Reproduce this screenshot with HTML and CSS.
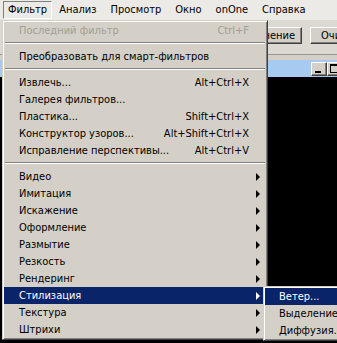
FILE: index.html
```html
<!DOCTYPE html>
<html lang="ru">
<head>
  <meta charset="UTF-8">
  <title>Фильтр</title>
  <link rel="stylesheet" href="styles.css">
</head>
<body>
  <div class="menubar">
    <span class="mb-item active">Фильтр</span>
    <span class="mb-item">Анализ</span>
    <span class="mb-item">Просмотр</span>
    <span class="mb-item">Окно</span>
    <span class="mb-item">onOne</span>
    <span class="mb-item">Справка</span>
  </div>

  <div class="workspace">
    <div class="toolbar">
      <span class="btn btn-one">Сохранение</span>
      <span class="btn btn-two">Очистить</span>
    </div>
    <div class="doc">
      <div class="doc-title">
        <span class="wbtn"><i class="min"></i></span>
        <span class="wbtn"><i class="max"></i></span>
      </div>
      <div class="doc-body"></div>
    </div>
  </div>

  <div class="menu">
    <div class="mi disabled"><span class="lbl">Последний фильтр</span><span class="key">Ctrl+F</span></div>
    <div class="sep"></div>
    <div class="mi"><span class="lbl">Преобразовать для смарт-фильтров</span></div>
    <div class="sep"></div>
    <div class="mi"><span class="lbl">Извлечь...</span><span class="key">Alt+Ctrl+X</span></div>
    <div class="mi"><span class="lbl">Галерея фильтров...</span></div>
    <div class="mi"><span class="lbl">Пластика...</span><span class="key">Shift+Ctrl+X</span></div>
    <div class="mi"><span class="lbl">Конструктор узоров...</span><span class="key">Alt+Shift+Ctrl+X</span></div>
    <div class="mi"><span class="lbl">Исправление перспективы...</span><span class="key">Alt+Ctrl+V</span></div>
    <div class="sep"></div>
    <div class="mi"><span class="lbl">Видео</span><i class="arrow"></i></div>
    <div class="mi"><span class="lbl">Имитация</span><i class="arrow"></i></div>
    <div class="mi"><span class="lbl">Искажение</span><i class="arrow"></i></div>
    <div class="mi"><span class="lbl">Оформление</span><i class="arrow"></i></div>
    <div class="mi"><span class="lbl">Размытие</span><i class="arrow"></i></div>
    <div class="mi"><span class="lbl">Резкость</span><i class="arrow"></i></div>
    <div class="mi"><span class="lbl">Рендеринг</span><i class="arrow"></i></div>
    <div class="mi selected"><span class="lbl">Стилизация</span><i class="arrow"></i></div>
    <div class="mi"><span class="lbl">Текстура</span><i class="arrow"></i></div>
    <div class="mi"><span class="lbl">Штрихи</span><i class="arrow"></i></div>
  </div>

  <div class="menu submenu">
    <div class="mi selected"><span class="lbl">Ветер...</span></div>
    <div class="mi"><span class="lbl">Выделение краев...</span></div>
    <div class="mi"><span class="lbl">Диффузия...</span></div>
  </div>
</body>
</html>
```

FILE: styles.css
```css
body {
  margin: 0;
  width: 337px;
  height: 343px;
  overflow: hidden;
  position: relative;
  font-family: "DejaVu Sans Condensed", "DejaVu Sans", sans-serif;
  font-stretch: semi-condensed;
  font-size: 11px;
  color: #000;
  background: #d4d0c8;
}

.menubar {
  height: 20px;
  display: flex;
  align-items: center;
  padding-left: 3px;
  background: #eceae6;
  white-space: nowrap;
}
.mb-item {
  height: 16px;
  line-height: 16px;
  padding: 0 6px;
  border: 1px solid transparent;
}
.mb-item.active {
  padding: 0 4px 0 4px;
  border-color: #808080 #fff #fff #808080;
}

.workspace {
  width: 345px;
}
.toolbar {
  height: 35px;
  box-sizing: border-box;
  display: flex;
  align-items: flex-start;
  gap: 8px;
  padding: 7px 0 0 230px;
  background: #dcd9d2;
  border-bottom: 1px solid #9a978f;
  white-space: nowrap;
  overflow: hidden;
}
.btn {
  flex: none;
  height: 17px;
  line-height: 16px;
  box-sizing: border-box;
  border: 1px solid;
  border-color: #fff #404040 #404040 #fff;
  box-shadow: inset -1px -1px 0 #808080;
  background: #d4d0c8;
  overflow: hidden;
}
.btn-one {
  width: 72px;
  text-align: right;
  padding-right: 6px;
}
.btn-two {
  width: 70px;
  padding-left: 10px;
}

.doc {
  padding-top: 5px;
}
.doc-title {
  height: 17px;
  display: flex;
  align-items: center;
  justify-content: flex-end;
  padding-right: 2px;
  background: #a6caf0;
}
.wbtn {
  width: 16px;
  height: 14px;
  box-sizing: border-box;
  border: 1px solid;
  border-color: #fff #404040 #404040 #fff;
  box-shadow: inset -1px -1px 0 #808080;
  background: #d4d0c8;
  position: relative;
}
.wbtn .min {
  position: absolute;
  left: 3px;
  bottom: 2px;
  width: 6px;
  height: 2px;
  background: #000;
}
.wbtn .max {
  position: absolute;
  left: 2px;
  top: 1px;
  width: 9px;
  height: 9px;
  box-sizing: border-box;
  border: 1px solid #000;
  border-top-width: 2px;
}
.doc-body {
  height: 270px;
  background: #000;
}

.menu {
  position: absolute;
  top: 20px;
  left: 2px;
  width: 266px;
  box-sizing: border-box;
  padding: 1px 0;
  border: 1px solid;
  border-color: #d4d0c8 #404040 #404040 #d4d0c8;
  box-shadow: inset 1px 1px 0 #fff, inset -1px -1px 0 #808080;
  background: #d4d0c8;
  white-space: nowrap;
  overflow: hidden;
}
.mi {
  height: 17px;
  line-height: 17px;
  display: flex;
  align-items: center;
  padding: 0 6px 0 15px;
  margin: 0 1px;
}
.mi .lbl {
  flex: 1;
  min-width: 0;
}
.mi .key {
  margin-right: 11px;
}
.mi.disabled {
  color: #a19e96;
}
.mi.selected {
  background: #0a246a;
  color: #fff;
}
.arrow {
  width: 0;
  height: 0;
  border-left: 4px solid #000;
  border-top: 4px solid transparent;
  border-bottom: 4px solid transparent;
}
.selected .arrow {
  border-left-color: #fff;
}
.sep {
  height: 9px;
  box-sizing: border-box;
  margin: 0 2px;
  padding-top: 3px;
}
.sep::before {
  content: "";
  display: block;
  border-top: 1px solid #808080;
  border-bottom: 1px solid #fff;
}

.submenu {
  top: 286px;
  left: 263px;
  width: 130px;
}
.submenu .mi {
  padding-left: 14px;
}
```
